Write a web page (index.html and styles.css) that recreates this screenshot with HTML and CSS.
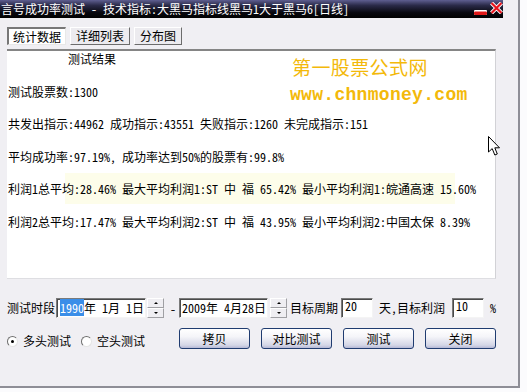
FILE: index.html
```html
<!DOCTYPE html>
<html lang="zh-CN">
<head>
    <meta charset="UTF-8">
    <title>信号成功率测试</title>
    <link rel="stylesheet" href="styles.css">
</head>
<body>
    <div class="window">
        <div class="titlebar">
            <span class="title">言号成功率测试 - 技术指标:大黑马指标线黑马1大于黑马6[日线]</span>
            <span class="winbtns">
                <svg class="btn-min" width="13" height="5" viewBox="0 0 13 5">
                    <rect x="0" y="0" width="13" height="5" rx="1" fill="#fff"/>
                    <rect x="0" y="1.5" width="13" height="3.5" rx="1" fill="#e01818"/>
                </svg>
                <svg class="btn-close" width="13" height="12" viewBox="0 0 13 12">
                    <path d="M1.5 1 L11.5 11 M11.5 1 L1.5 11" stroke="#fff" stroke-width="4"/>
                    <path d="M1.5 1 L11.5 11 M11.5 1 L1.5 11" stroke="#e8141c" stroke-width="2.2"/>
                </svg>
            </span>
        </div>

        <div class="tabs">
            <div class="tab active">统计数据</div>
            <div class="tab">详细列表</div>
            <div class="tab">分布图</div>
        </div>

        <div class="panel">
            <div class="ghost"></div>
            <div class="watermark">
                <div class="wm-cn">第一股票公式网</div>
                <div class="wm-url">www.chnmoney.com</div>
            </div>
            <p class="heading">测试结果</p>
            <p>测试股票数:1300</p>
            <p>共发出指示:44962 成功指示:43551 失败指示:1260 未完成指示:151</p>
            <p>平均成功率:97.19%, 成功率达到50%的股票有:99.8%</p>
            <p>利润1总平均:28.46% 最大平均利润1:ST 中 福 65.42% 最小平均利润1:皖通高速 15.60%</p>
            <p>利润2总平均:17.47% 最大平均利润2:ST 中 福 43.95% 最小平均利润2:中国太保 8.39%</p>
        </div>

        <svg class="cursor" width="13" height="21" viewBox="0 0 13 21">
            <path d="M0.5 0.5 L0.5 16 L4.2 12.6 L6.8 19 L9.3 18 L6.8 11.8 L11.5 11.8 Z" fill="#fff" stroke="#000" stroke-width="1"/>
        </svg>

        <div class="controls">
            <div class="row">
                <span class="label">测试时段</span>
                <div class="field date1"><span class="sel">1990</span>年 1月 1日</div>
                <div class="spin"><span class="up"></span><span class="down"></span></div>
                <span class="dash">-</span>
                <div class="field date2">2009年 4月28日</div>
                <div class="spin spin2"><span class="up"></span><span class="down"></span></div>
                <span class="label lbl-period">目标周期</span>
                <div class="field num">20</div>
                <span class="label lbl-profit">天,目标利润</span>
                <div class="field num num2">10</div>
                <span class="label lbl-pct">%</span>
            </div>
            <div class="row row2">
                <div class="radios">
                    <span class="radio checked"></span>
                    <span class="radio-label">多头测试</span>
                    <span class="radio radio-b"></span>
                    <span class="radio-label">空头测试</span>
                </div>
                <div class="buttons">
                    <button>拷贝</button>
                    <button>对比测试</button>
                    <button>测试</button>
                    <button>关闭</button>
                </div>
            </div>
        </div>
    </div>
</body>
</html>
```

FILE: styles.css
```css
body {
    margin: 0;
    background: #fbfbfd;
}
.window {
    position: relative;
    width: 520px;
    height: 388px;
    box-sizing: border-box;
    background: #f0eff3;
    border-right: 2px solid #8e8e96;
    border-bottom: 2px solid #8e8e96;
    font-family: "Noto Sans Mono CJK SC", "Noto Sans CJK SC", monospace;
    font-size: 12px;
    color: #000;
}
.titlebar {
    width: 503px;
    height: 18px;
    display: flex;
    justify-content: space-between;
    align-items: center;
    background: linear-gradient(#5e5e90 0, #2a2a48 30%, #08080f 70%, #000 100%);
    color: #fff;
}
.title {
    padding-left: 1px;
    line-height: 18px;
    white-space: pre;
}
.winbtns {
    display: flex;
    align-items: flex-start;
    height: 18px;
}
.btn-min {
    margin-top: 10px;
}
.btn-close {
    margin: 2px 0 0 3px;
}
.tabs {
    display: flex;
    gap: 4px;
    margin: 9px 0 0 7px;
    height: 18px;
}
.tab {
    height: 18px;
    box-sizing: border-box;
    padding: 0 5px;
    line-height: 16px;
    border: 1px solid;
    border-color: #fff #6c6c6c #6c6c6c #fff;
    background: #ecebef;
}
.tab.active {
    background: #fff;
    border-width: 2px 1px 1px 2px;
    border-color: #777 #e8e8e8 #e8e8e8 #777;
    line-height: 15px;
    padding: 0 4px;
}
.panel {
    position: relative;
    margin: 4px 0 0 7px;
    width: 489px;
    height: 230px;
    box-sizing: border-box;
    padding-left: 1px;
    background: #fff;
    border-top: 2px solid #858585;
    border-right: 1px solid #d2d2d6;
    border-bottom: 1px solid #dedee2;
}
.panel p {
    position: relative;
    margin: 0;
    height: 16px;
    line-height: 16px;
    white-space: pre;
}
.panel p + p {
    margin-top: 16.5px;
}
.panel .heading {
    padding-left: 60px;
}
.ghost {
    position: absolute;
    left: 58px;
    top: 122px;
    width: 390px;
    height: 31px;
    background: #fdfdea;
}
.watermark {
    position: absolute;
    left: 283px;
    top: 6px;
    color: #f3b90a;
}
.wm-cn {
    font-family: "Noto Sans CJK SC", sans-serif;
    font-size: 19px;
    line-height: 20px;
    letter-spacing: 0.4px;
    padding-left: 2px;
}
.wm-url {
    margin-top: 9px;
    font-family: "Liberation Mono", monospace;
    font-weight: bold;
    font-size: 18px;
    line-height: 18px;
    letter-spacing: 0.3px;
}
.cursor {
    position: absolute;
    left: 488px;
    top: 136px;
}
.controls {
    margin: 19px 0 0 7px;
}
.row {
    display: flex;
    align-items: center;
    height: 20px;
}
.label {
    white-space: pre;
    line-height: 20px;
}
.field {
    height: 20px;
    box-sizing: border-box;
    border: 1px solid;
    border-color: #7a7a7a #f4f4f4 #f4f4f4 #7a7a7a;
    box-shadow: inset 1px 1px 0 #4a4a4a;
    background: #fff;
    line-height: 17px;
    padding-left: 3px;
    white-space: pre;
}
.date1 {
    width: 90px;
    margin-left: 1px;
}
.sel {
    background: #3a8ee8;
    color: #fff;
}
.spin {
    display: flex;
    flex-direction: column;
    width: 17px;
    height: 20px;
    margin-left: 1px;
}
.spin span {
    position: relative;
    flex: 1;
    background: #efeef2;
    border: 1px solid;
    border-color: #fff #a0a0a4 #a0a0a4 #fff;
}
.spin span::after {
    content: "";
    position: absolute;
    left: 6px;
    border-left: 2px solid transparent;
    border-right: 2px solid transparent;
}
.spin .up::after {
    top: 3px;
    border-bottom: 2px solid #000;
}
.spin .down::after {
    top: 3px;
    border-top: 2px solid #000;
}
.dash {
    margin-left: 6px;
    width: 6px;
}
.date2 {
    width: 89px;
    margin-left: 3px;
    padding-left: 2px;
}
.spin2 {
    margin-left: 2px;
}
.lbl-period {
    margin-left: 3px;
}
.num {
    width: 32px;
    margin-left: 3px;
    line-height: 14px;
}
.lbl-profit {
    margin-left: 6px;
}
.num2 {
    margin-left: 7px;
}
.lbl-pct {
    margin-left: 6px;
}
.row2 {
    margin-top: 10px;
    height: 21px;
    align-items: flex-start;
}
.radios {
    display: flex;
    align-items: center;
    margin-top: 6px;
}
.radio {
    position: relative;
    width: 11px;
    height: 11px;
    box-sizing: border-box;
    border-radius: 50%;
    border: 1px solid;
    border-color: #6e6e6e #e4e4e4 #e4e4e4 #6e6e6e;
    background: #fff;
}
.radio.checked::after {
    content: "";
    position: absolute;
    left: 3px;
    top: 3px;
    width: 3px;
    height: 3px;
    border-radius: 50%;
    background: #000;
}
.radio-label {
    margin-left: 5px;
    line-height: 14px;
}
.radio-b {
    margin-left: 10px;
}
.buttons {
    display: flex;
    gap: 11px;
    margin-left: 34px;
}
button {
    width: 71px;
    height: 21px;
    padding: 0;
    border: 1px solid #203c70;
    border-radius: 3px;
    background: linear-gradient(#ffffff 0%, #f5f5f9 40%, #d4d6e6 85%, #b6b9d6 100%);
    font: inherit;
    color: #000;
}
```
